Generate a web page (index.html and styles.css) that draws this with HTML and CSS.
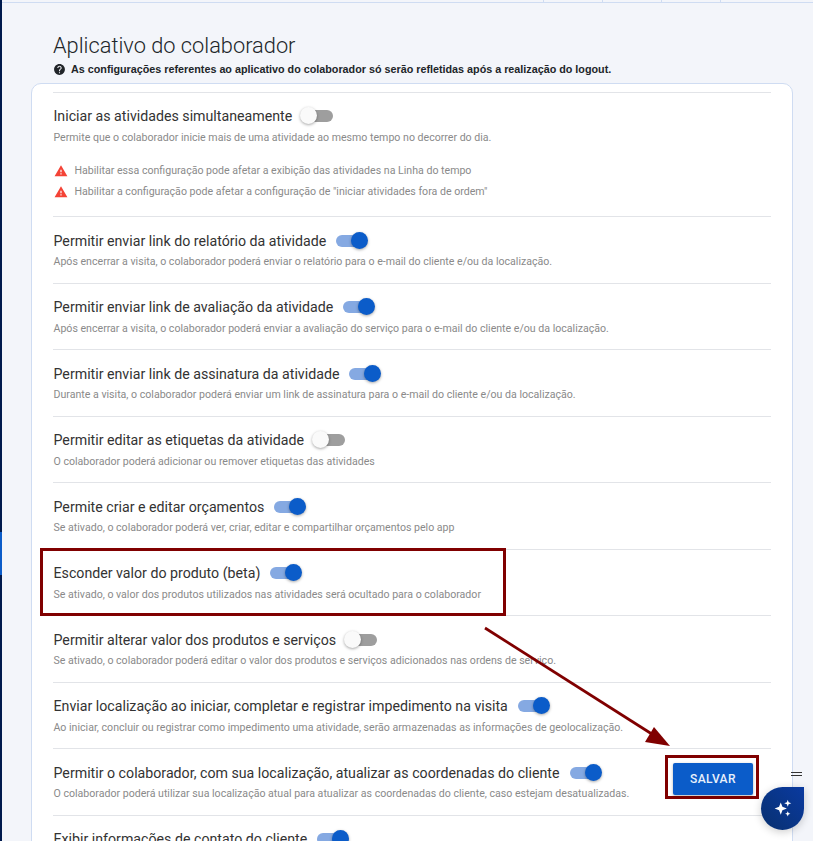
FILE: index.html
```html
<!DOCTYPE html>
<html lang="pt-BR">
<head>
  <meta charset="UTF-8" />
  <meta name="viewport" content="width=device-width, initial-scale=1.0" />
  <title>Aplicativo do colaborador</title>
  <link rel="stylesheet" href="styles.css">
</head>
<body>

  <div class="sidebar"><span class="sidebar-active"></span></div>

  <div class="main">
    <div class="topbar">
      <span class="tab"></span>
      <span class="tab"></span>
      <span class="tab"></span>
      <span class="tab"></span>
    </div>

    <h1>Aplicativo do colaborador</h1>
    <p class="notice">
      <svg class="help-icon" viewBox="0 0 24 24"><path d="M12 2C6.48 2 2 6.48 2 12s4.48 10 10 10 10-4.48 10-10S17.52 2 12 2zm1 17h-2v-2h2v2zm2.07-7.75-.9.92C13.45 12.9 13 13.5 13 15h-2v-.5c0-1.1.45-2.1 1.17-2.83l1.24-1.26c.37-.36.59-.86.59-1.41 0-1.1-.9-2-2-2s-2 .9-2 2H8c0-2.21 1.79-4 4-4s4 1.79 4 4c0 .88-.36 1.68-.93 2.25z"/></svg>
      As configurações referentes ao aplicativo do colaborador só serão refletidas após a realização do logout.
    </p>

    <div class="card">
      <div class="row row-first">
        <div class="row-title">Iniciar as atividades simultaneamente <span class="switch"></span></div>
        <div class="row-desc">Permite que o colaborador inicie mais de uma atividade ao mesmo tempo no decorrer do dia.</div>
        <div class="warnings">
          <div class="warning">
            <svg class="warn-icon" viewBox="0 0 24 24"><path d="M1 21h22L12 2 1 21zm12-3h-2v-2h2v2zm0-4h-2v-4h2v4z"/></svg>
            Habilitar essa configuração pode afetar a exibição das atividades na Linha do tempo
          </div>
          <div class="warning">
            <svg class="warn-icon" viewBox="0 0 24 24"><path d="M1 21h22L12 2 1 21zm12-3h-2v-2h2v2zm0-4h-2v-4h2v4z"/></svg>
            Habilitar a configuração pode afetar a configuração de "iniciar atividades fora de ordem"
          </div>
        </div>
      </div>

      <div class="row">
        <div class="row-title">Permitir enviar link do relatório da atividade <span class="switch on"></span></div>
        <div class="row-desc">Após encerrar a visita, o colaborador poderá enviar o relatório para o e-mail do cliente e/ou da localização.</div>
      </div>
      <div class="row">
        <div class="row-title">Permitir enviar link de avaliação da atividade <span class="switch on"></span></div>
        <div class="row-desc">Após encerrar a visita, o colaborador poderá enviar a avaliação do serviço para o e-mail do cliente e/ou da localização.</div>
      </div>
      <div class="row">
        <div class="row-title">Permitir enviar link de assinatura da atividade <span class="switch on"></span></div>
        <div class="row-desc">Durante a visita, o colaborador poderá enviar um link de assinatura para o e-mail do cliente e/ou da localização.</div>
      </div>
      <div class="row">
        <div class="row-title">Permitir editar as etiquetas da atividade <span class="switch"></span></div>
        <div class="row-desc">O colaborador poderá adicionar ou remover etiquetas das atividades</div>
      </div>
      <div class="row">
        <div class="row-title">Permite criar e editar orçamentos <span class="switch on"></span></div>
        <div class="row-desc">Se ativado, o colaborador poderá ver, criar, editar e compartilhar orçamentos pelo app</div>
      </div>
      <div class="row">
        <div class="row-title">Esconder valor do produto (beta) <span class="switch on"></span></div>
        <div class="row-desc">Se ativado, o valor dos produtos utilizados nas atividades será ocultado para o colaborador</div>
      </div>
      <div class="row">
        <div class="row-title">Permitir alterar valor dos produtos e serviços <span class="switch"></span></div>
        <div class="row-desc">Se ativado, o colaborador poderá editar o valor dos produtos e serviços adicionados nas ordens de serviço.</div>
      </div>
      <div class="row">
        <div class="row-title">Enviar localização ao iniciar, completar e registrar impedimento na visita <span class="switch on"></span></div>
        <div class="row-desc">Ao iniciar, concluir ou registrar como impedimento uma atividade, serão armazenadas as informações de geolocalização.</div>
      </div>
      <div class="row">
        <div class="row-title">Permitir o colaborador, com sua localização, atualizar as coordenadas do cliente <span class="switch on"></span></div>
        <div class="row-desc">O colaborador poderá utilizar sua localização atual para atualizar as coordenadas do cliente, caso estejam desatualizadas.</div>
      </div>
      <div class="row">
        <div class="row-title">Exibir informações de contato do cliente <span class="switch on"></span></div>
      </div>
    </div>
  </div>

  <!-- annotations drawn over the screenshot -->
  <div class="mark mark-row"></div>
  <div class="mark mark-save"></div>
  <svg class="arrow" viewBox="0 0 813 841">
    <line x1="485" y1="628" x2="655" y2="736" stroke="#800000" stroke-width="2.7"/>
    <polygon points="670,746 645,742 654,727" fill="#800000"/>
  </svg>

  <button class="save-button">SALVAR</button>
  <div class="menu-lines"></div>
  <div class="fab">
    <svg viewBox="0 0 24 24"><path d="M10 5l1.9 5.1L17 12l-5.1 1.9L10 19l-1.9-5.1L3 12l5.1-1.9z"/><path d="M18 2l1 2.9L22 6l-3 1.1L18 10l-1-2.9L14 6l3-1.1z"/><path d="M18 15l.9 2.1L21 18l-2.1.9L18 21l-.9-2.1L15 18l2.1-.9z"/></svg>
  </div>

</body>
</html>
```

FILE: styles.css
```css
html, body {
  height: 100%;
}

body {
  margin: 0;
  padding: 0;
  display: flex;
  background-color: #f3f5fa;
  font-family: 'Roboto', 'Liberation Sans', sans-serif;
  color: #212529;
  overflow: hidden;
}

.sidebar {
  flex: 0 0 2px;
  height: 100%;
  background: #001a4d;
  padding-top: 532px;
  box-sizing: border-box;
}

.sidebar-active {
  display: block;
  height: 43px;
  background: #0b5cc9;
}

.main {
  flex: 1;
  min-width: 0;
}

.topbar {
  height: 2px;
  border-bottom: 1px solid #cfdcf2;
  display: flex;
  justify-content: flex-end;
  padding-right: 34px;
}

.tab {
  width: 58px;
  border-left: 1px solid #cfdcf2;
}

h1 {
  margin: 30px 0 0 51px;
  font-size: 21.8px;
  line-height: 26px;
  font-weight: 300;
  color: #212529;
}

.notice {
  margin: 3px 0 0 51px;
  display: flex;
  align-items: center;
  gap: 5px;
  font-family: 'Liberation Sans', Arial, sans-serif;
  font-size: 10.78px;
  line-height: 14px;
  font-weight: 700;
  color: #212529;
}

.help-icon {
  width: 13px;
  height: 13px;
  fill: #212529;
  flex: none;
}

.card {
  margin: 7px 20px 0 29px;
  padding: 8px 21px 0;
  background: #fff;
  border: 1px solid #cfdcf2;
  border-radius: 10px;
}

.row {
  height: 66.5px;
  box-sizing: border-box;
  border-top: 1px solid #e2e4e8;
  padding: 13.5px 0 0 0.5px;
}

.row-first {
  height: 124px;
  padding-top: 13px;
}

.row-first .row-desc {
  margin-top: 5px;
}

.row-title {
  display: flex;
  align-items: center;
  gap: 10px;
  font-size: 14.2px;
  line-height: 20px;
  color: #333;
  white-space: nowrap;
}

.row-desc {
  margin-top: 4.5px;
  font-size: 10.6px;
  line-height: 14px;
  color: #8a8a8a;
  white-space: nowrap;
}

.warnings {
  margin-top: 19px;
  display: flex;
  flex-direction: column;
  gap: 7px;
}

.warning {
  display: flex;
  align-items: center;
  gap: 7px;
  font-size: 10.6px;
  line-height: 14px;
  color: #8a8a8a;
}

.warn-icon {
  width: 14px;
  height: 14px;
  fill: #f44336;
  flex: none;
}

/* toggle */
.switch {
  position: relative;
  display: inline-block;
  width: 31px;
  height: 12px;
  border-radius: 6px;
  background: #9e9e9e;
}

.switch::after {
  content: '';
  position: absolute;
  top: -3px;
  left: -2px;
  width: 17px;
  height: 17px;
  border-radius: 50%;
  background: #fafafa;
  box-shadow: 0 1px 3px rgba(0, 0, 0, 0.35);
}

.switch.on {
  background: #85a9e2;
}

.switch.on::after {
  left: 15px;
  background: #0b5cc9;
}

/* overlays */
.mark {
  position: absolute;
  box-sizing: border-box;
  border: 3px solid #800000;
}

.mark-row {
  left: 40px;
  top: 548px;
  width: 466px;
  height: 68px;
}

.mark-save {
  left: 665px;
  top: 755px;
  width: 94px;
  height: 44px;
}

.arrow {
  position: absolute;
  left: 0;
  top: 0;
  width: 813px;
  height: 841px;
  pointer-events: none;
}

.save-button {
  position: absolute;
  left: 673px;
  top: 763px;
  width: 80px;
  height: 32px;
  border: none;
  border-radius: 2px;
  background: #0b5cc9;
  color: #e8f0fb;
  font-family: 'Roboto', sans-serif;
  font-size: 12px;
  font-weight: 500;
  letter-spacing: 0.4px;
  box-shadow: 0 1px 3px rgba(0, 0, 0, 0.3);
}

.menu-lines {
  position: absolute;
  left: 791px;
  top: 772px;
  width: 11px;
  height: 2px;
  border-top: 1px solid #333;
  border-bottom: 1px solid #333;
}

.fab {
  position: absolute;
  left: 761px;
  top: 787px;
  width: 43px;
  height: 43px;
  border-radius: 50% 0 50% 50%;
  background: linear-gradient(45deg, #08306f, #0a3aa0);
  box-shadow: 0 2px 8px rgba(0, 0, 0, 0.2);
  display: flex;
  align-items: center;
  justify-content: center;
}

.fab svg {
  width: 21px;
  height: 21px;
  fill: #fff;
}
```
